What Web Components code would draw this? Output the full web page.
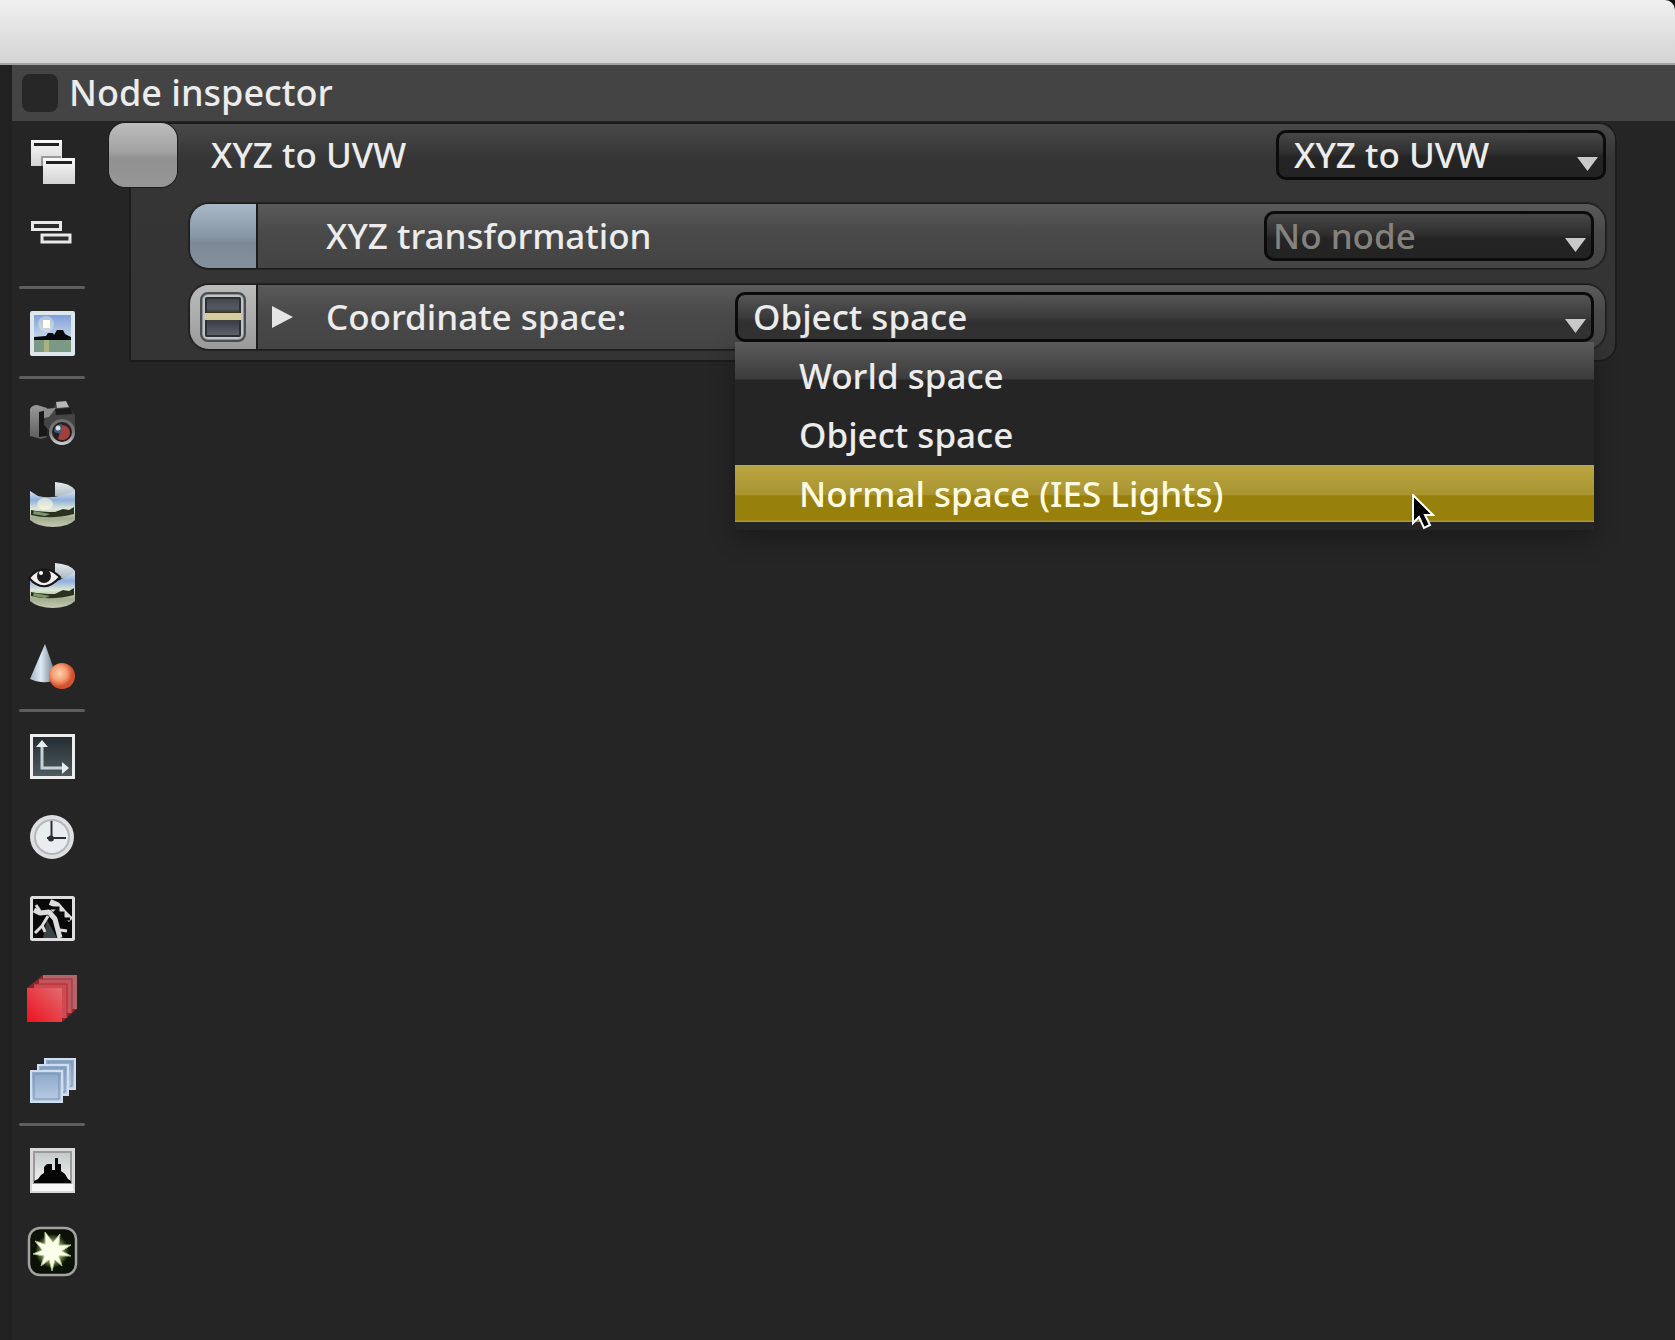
<!DOCTYPE html>
<html lang="en">
<head>
<meta charset="utf-8">
<title>Node inspector</title>
<style>
  html, body { height:100%; }
  body {
    margin:0; background:#252525; color:#ececec;
    font:500 35px/48px "Noto Sans", "Open Sans", sans-serif;
  }
</style>
</head>
<body>
<app-window>
  <inspector-header slot="header">Node inspector</inspector-header>
  <tool-bar slot="tools"></tool-bar>
  <node-panel label="XYZ to UVW" value="XYZ to UVW">
    <node-row label="XYZ transformation" value="No node" kind="pin"></node-row>
    <node-row label="Coordinate space:" value="Object space" kind="enum">
      <drop-menu slot="menu">
        <menu-item>World space</menu-item>
        <menu-item>Object space</menu-item>
        <menu-item active>Normal space (IES Lights)</menu-item>
      </drop-menu>
    </node-row>
  </node-panel>
</app-window>

<script>
// shared look of every drop-down
const SELECT_CSS = `
  .pick { position:relative; display:flex; }
  select {
    appearance:none; box-sizing:border-box; width:100%; height:50px; margin:0;
    padding:0 44px 0 15px; border:3px solid #0b0b0b; border-radius:10px;
    background:linear-gradient(#474747, #2f2f2f 45%, #242424 55%, #232323);
    color:inherit; font:inherit; line-height:44px; outline:0;
  }
  .pick svg { position:absolute; right:8px; bottom:9px; width:21px; height:14px; pointer-events:none; }
`;
const ARROW = '<svg viewBox="0 0 21 14"><path d="M0 0h21L10.500 14z" fill="#c9c9c9"/></svg>';

class AppWindow extends HTMLElement {
  constructor() {
    super();
    this.attachShadow({ mode: 'open' }).innerHTML = `
      <style>
        :host { display:flex; flex-direction:column; min-height:100vh; }
        .top { background:#111; }
        .title {
          height:65px; box-sizing:border-box; border-bottom:2px solid #a2a2a2;
          border-top-right-radius:10px;
          background:linear-gradient(#f0f0f0, #e2e2e2 50%, #d3d3d3);
        }
        .content {
          flex:1; display:flex; flex-direction:column;
          border-left:12px solid #212121; background:#252525;
        }
        .work { flex:1; display:flex; align-items:flex-start; }
        main { flex:1; min-width:0; padding:1px 58px 0 17px; }
      </style>
      <div class="top"><div class="title"></div></div>
      <div class="content">
        <slot name="header"></slot>
        <div class="work">
          <slot name="tools"></slot>
          <main><slot></slot></main>
        </div>
      </div>
    `;
  }
}

class InspectorHeader extends HTMLElement {
  constructor() {
    super();
    this.attachShadow({ mode: 'open' }).innerHTML = `
      <style>
        :host { display:flex; align-items:center; gap:11px; height:56px; padding-left:10px; background:#444; }
        i { width:36px; height:38px; border-radius:8px; background:#272727; }
        h1 { margin:0; font-size:36px; font-weight:500; }
      </style>
      <i></i><h1><slot></slot></h1>
    `;
  }
}

const ICONS = {
  windows: `
    <path d="M1 0h31v26H1z" fill="url(#w)"/><path d="M4 3h25v3H4z" fill="#222"/>
    <path d="M11 16h20v10H11z" fill="#555" opacity=".5"/>
    <path d="M13 18h32v26H13z" fill="url(#w)"/><path d="M16 21h26v3H16z" fill="#222"/>`,
  collapsed: `
    <g fill="#2c2c2c" stroke="#e8e8e8" stroke-width="3"><path d="M2.500 1.500h28v7h-28zM12 14h28v7H12z"/></g>`,
  picture: `
    <rect width="45" height="45" rx="2" fill="#dce6ec"/><path d="M4 4h37v24H4z" fill="url(#sky)"/>
    <circle cx="16" cy="13" r="8" fill="#fffde0" opacity=".35"/><path d="M13 9h7v8h-7z" fill="#fffff0"/>
    <path d="M4 28h37v13H4z" fill="#7b9a86"/><path d="M14 29h5v12h-5z" fill="#b3ba7e" opacity=".8"/>
    <path d="M4 26l12-1 2-3h5l1 2 3-5h6l2 4 6 3v3H4z" fill="#060a0c"/>`,
  camera: `
    <path d="M0 8q2-4 7-4l10 3v29l-6 2-11-3z" fill="url(#metal)"/><path d="M9 11l8-2v26l-8 1z" fill="#181818"/>
    <path d="M14 9l9-2 3-4 13 3 6 8v20H23l-9-10z" fill="#444"/><path d="M14 8l12-1-7 9-5 1z" fill="#8d8d8d"/>
    <path d="M26 1l10-1 3 6-12 1z" fill="#b7b7b7"/><path d="M25 8l15-1 3 6-17 1z" fill="#1b1b1b"/>
    <circle cx="32" cy="31" r="13" fill="url(#rim)"/><circle cx="32" cy="31" r="10" fill="#241f22"/>
    <path d="M32 24a8 8 0 018 8 8 8 0 01-12 6z" fill="#a2413a"/><path d="M24 31a8 8 0 018-8l-1 10z" fill="#41597d"/>
    <circle cx="28" cy="27" r="2.500" fill="#d5dae4"/>`,
  panorama: `
    <path d="M25 0q15 1 20 8v10L25 14z" fill="url(#metal2)"/>
    <path d="M0 9l8 5q17 4 37-5v29q-7 7-22 7T0 38z" fill="url(#pano)"/>
    <ellipse cx="15" cy="22" rx="8" ry="6" fill="#fffce0" opacity=".6"/>
    <path d="M1 28q10 2 24 2l8-3 6 1 5-3v7q-24 6-43 1z" fill="#27331f"/><path d="M4 29l16 3-5 2-12-2z" fill="#82966b"/>`,
  viewer: `
    <path d="M25 0q15 1 20 8v10L25 14z" fill="url(#metal2)"/>
    <path d="M0 16q22 9 45-7v29q-7 7-22 7T0 38z" fill="url(#pano)"/>
    <path d="M1 29q10 2 24 2l8-4 6 1 5-3v7q-24 6-43 1z" fill="#27331f"/><path d="M4 30l16 3-5 2-12-2z" fill="#82966b"/>
    <path d="M-1 15Q13-2 30 14 14 32-1 15z" fill="#f4eeee" stroke="#161616" stroke-width="2"/>
    <circle cx="14" cy="13" r="7" fill="#1a1a1c"/><circle cx="11" cy="10" r="2" fill="#fff"/>`,
  shapes: `
    <path d="M15 0l12 34q-10 8-27 1z" fill="url(#cone)"/>
    <circle cx="32" cy="32" r="13" fill="url(#ball)"/>`,
  axes: `
    <rect x="1.500" y="1.500" width="42" height="42" fill="url(#slate)" stroke="#eee" stroke-width="3"/>
    <path d="M12 10v24h24" fill="none" stroke="#c6d2d5" stroke-width="3"/>
    <path d="M12 6l6 7H6zM39 34l-7-6v12z" fill="#e6eef0"/>`,
  clock: `
    <circle cx="22" cy="22" r="22" fill="#dfdfe1"/><circle cx="22" cy="22" r="17" fill="#e9eded" stroke="#b5b7ba" stroke-width="2"/>
    <path d="M21.500 6v20M17 23h19" stroke="#293133" stroke-width="2"/><circle cx="21" cy="23.500" r="3" fill="#293133"/>`,
  kernel: `
    <rect x="1.500" y="1.500" width="42" height="42" rx="1" fill="#090909" stroke="#dedede" stroke-width="3"/>
    <path d="M17 24l10 18H13z" fill="#3a4444"/>
    <g fill="none" stroke="#dcdcdc" stroke-linejoin="bevel">
      <path d="M4 14l6 3 9-1 6 7 5 19" stroke-width="5"/><path d="M18 20l-6 10-7 7" stroke-width="3"/>
      <path d="M20 6l7 3 6 7 8 8" stroke-width="6"/><path d="M6 9l4 6M22 15l5-5M12 29l3 7M30 34l7 1" stroke-width="3"/>
    </g>
    <path d="M22 12h6v5h5v6h7" fill="none" stroke="#090909" stroke-width="3"/>`,
  red: `
    <path d="M-3 11L13-2h34v34L32 45H-3z" fill="#8d242b"/>
    <path d="M13-2h34v34H13z" fill="#b3666a"/><path d="M9 2h33v34H9z" fill="#c4555b"/>
    <path d="M4 7h33v34H4z" fill="#d1484f"/>
    <path d="M42 2v34M37 7v34M9 2h33M4 7h33" stroke="#9a3238" fill="none"/>
    <path d="M-3 11h35v34H-3z" fill="url(#red)"/>`,
  blue: `
    <g fill="url(#blue)" stroke="#cfdff0" stroke-width="2"><path d="M15 1h30v30H15z"/><path d="M8 7h30v30H8z"/>
    <path d="M1 13h31v31H1z"/></g><path d="M4 16h25v25H4z" fill="none" stroke="#7891b0"/>
    <path d="M11 12V10h24v24h-2M18 6V4h24v24h-2" fill="none" stroke="#7891b0"/>`,
  histogram: `
    <rect width="45" height="45" fill="#d9d9d9"/><path d="M4 4h37v31H4z" fill="url(#grey)" stroke="#999" stroke-width="2"/>
    <path d="M2 36h41v7H2z" fill="#f8f8f8"/>
    <path d="M4 35v-2l4-2 3-4 3-2v-6l3-3h5v6h3V10h3v6h3v7l4 3 3 5 3 2v2z" fill="#050505"/>`,
  glow: `
    <rect x="-1" y="-1" width="47" height="47" rx="11" fill="#0b1205" stroke="#a2a2a2" stroke-width="2.500"/>
    <circle cx="22" cy="22" r="17" fill="url(#glow)"/>
    <path d="M15 3l8 10 7-8-1 11 12 0-9 6 9 5-12 0 3 10-7-6-3 11-3-11-8 6 3-10-11-2 9-4-7-9 10 3z" fill="#faffea" stroke="#a8bd7a"/>`
};

const TOOLS = [
  ['windows', 'Expand nodes'], ['collapsed', 'Collapse nodes'], null,
  ['picture', 'Render target'], null,
  ['camera', 'Camera'], ['panorama', 'Environment'], ['viewer', 'Visible environment'], ['shapes', 'Geometry'], null,
  ['axes', 'Resolution'], ['clock', 'Animation'], ['kernel', 'Kernel'], ['red', 'Render layer'], ['blue', 'Render passes'], null,
  ['histogram', 'Imager'], ['glow', 'Post processing']
];

class ToolBar extends HTMLElement {
  constructor() {
    super();
    this.attachShadow({ mode: 'open' }).innerHTML = `
      <style>
        :host { display:flex; flex-direction:column; width:80px; }
        button {
          display:flex; align-items:center; justify-content:center;
          height:81px; padding:0; border:0; background:none;
        }
        button svg { width:44px; height:44px; overflow:visible; }
        hr { width:66px; height:3px; margin:3px auto; border:0; border-radius:2px; background:#5e5e5e; }
        .defs { position:absolute; width:0; height:0; }
      </style>
      <svg class="defs"><defs>
        ${this._grad('w', '#fafafa', '#d2d2d2')}
        ${this._grad('sky', '#7f9fda', '#c9d9e8')}
        ${this._grad('metal', '#9a9a9a', '#5d5d5d')}
        ${this._grad('metal2', '#e6edee', '#9fb0ba')}
        ${this._grad('rim', '#6d6d6d', '#777', '#d5d5d5')}
        ${this._grad('pano', '#dbe5ee', '#8fb0da', '#e0e8d8', '#a3ac8e', '#c3c9b4')}
        ${this._grad('slate', '#232c30', '#4f5c62')}
        ${this._grad('blue', '#8ba7c9', '#b9cde2')}
        ${this._grad('grey', '#c2c8c8', '#f3f3f3')}
        <linearGradient id="cone"><stop stop-color="#9fb5c4"/><stop offset=".4" stop-color="#dfeaf2"/><stop offset="1" stop-color="#566878"/></linearGradient>
        <linearGradient id="red" x1="1" y1="0" x2="0" y2="1"><stop stop-color="#df6c70"/><stop offset="1" stop-color="#f0101f"/></linearGradient>
        <radialGradient id="ball" cx=".4" cy=".4"><stop stop-color="#ffd3b0"/><stop offset=".6" stop-color="#f59a70"/><stop offset="1" stop-color="#d5512f"/></radialGradient>
        <radialGradient id="glow"><stop stop-color="#fff"/><stop offset=".4" stop-color="#b9d08a"/><stop offset="1" stop-color="#0b1205"/></radialGradient>
      </defs></svg>
      ${TOOLS.map(t => t
        ? `<button type="button" aria-label="${t[1]}"><svg viewBox="0 0 44 44">${ICONS[t[0]]}</svg></button>`
        : '<hr>').join('')}
    `;
  }

  // vertical gradient with evenly spaced stops
  _grad(id, ...colors) {
    const stops = colors.map((c, i) => `<stop offset="${i / (colors.length - 1)}" stop-color="${c}"/>`);
    return `<linearGradient id="${id}" x2="0" y2="1">${stops.join('')}</linearGradient>`;
  }
}

class NodePanel extends HTMLElement {
  constructor() {
    super();
    const label = this.getAttribute('label');
    this.attachShadow({ mode: 'open' }).innerHTML = `
      <style>
        ${SELECT_CSS}
        :host { display:block; padding-left:20px; }
        section {
          display:flex; flex-direction:column; gap:15px; box-sizing:border-box;
          padding:0 11px 12px 60px; border-radius:0 18px 18px 0;
          background:linear-gradient(#494949, #353535 38px, #343434);
          box-shadow:inset 0 0 0 2px #1c1c1c;
        }
        header { display:flex; align-items:center; height:66px; margin-left:-80px; }
        i {
          width:68px; height:64px; margin-right:34px; border-radius:16px;
          background:linear-gradient(#bdbdbd, #a2a2a2 45%, #919191 55%, #969696);
          box-shadow:0 0 0 1px #1c1c1c;
        }
        label { flex:1; }
        .pick { width:330px; }
      </style>
      <section>
        <header>
          <i></i>
          <label for="type">${label}</label>
          <div class="pick"><select id="type"><option>${this.getAttribute('value')}</option></select>${ARROW}</div>
        </header>
        <slot></slot>
      </section>
    `;
  }
}

class NodeRow extends HTMLElement {
  constructor() {
    super();
    const isEnum = this.getAttribute('kind') === 'enum';
    this.attachShadow({ mode: 'open' }).innerHTML = `
      <style>
        ${SELECT_CSS}
        :host {
          display:flex; align-items:center; box-sizing:border-box; height:66px;
          padding-right:11px; border:1px solid #1c1c1c; border-radius:20px;
          background:linear-gradient(#5a5a5a, #494949 45%, #444);
          box-shadow:0 0 1px 1px #242424;
        }
        .pin {
          display:flex; align-items:center; justify-content:center;
          width:66px; height:64px; border-right:2px solid #1c1c1c; border-radius:19px 0 0 19px;
          background:linear-gradient(#a9b8c7, #8797a5 50%, #7b8996 60%, #84919d);
        }
        .enum .pin { background:linear-gradient(#bcbcbc, #9a9a9a); }
        .pin svg { width:46px; height:50px; }
        .row { display:flex; flex:1; align-items:center; }
        button { display:flex; justify-content:center; width:68px; padding:0 20px 0 0; box-sizing:border-box; border:0; background:none; }
        button svg { width:21px; height:22px; }
        .gap { width:68px; }
        label { flex:1; }
        .pick { width:330px; }
        .pin-row select { color:#85817d; padding-left:6px; }
        .enum label { flex:none; width:409px; }
        .enum .pick { flex:1; width:auto; }
        .enum select { background:linear-gradient(#555, #3b3b3b 50%, #303030 60%, #343434); }
      </style>
      <div class="row ${isEnum ? 'enum' : 'pin-row'}">
        <div class="pin">${isEnum ? `
          <svg viewBox="0 0 46 50">
            <defs><linearGradient id="bar" x2="0" y2="1">
              <stop stop-color="#3f4347"/><stop offset=".3" stop-color="#555a63"/>
              <stop offset=".4" stop-color="#3c3420"/><stop offset=".65" stop-color="#3f444c"/><stop offset="1" stop-color="#646a72"/>
            </linearGradient></defs>
            <rect x="1" y="1" width="44" height="48" rx="7" fill="#8d9090" stroke="#4a4d4d" stroke-width="2"/>
            <rect x="4" y="4" width="38" height="42" rx="4" fill="url(#bar)" stroke="#c0c4c6" stroke-width="2"/>
            <rect x="6" y="6" width="34" height="38" rx="1" fill="none" stroke="#2c3033" stroke-width="2"/>
            <path d="M5 21h36v7H5z" fill="#d5cd9d"/>
          </svg>` : ''}</div>
        ${isEnum
          ? '<button type="button" aria-label="Expand"><svg viewBox="0 0 21 22"><path d="M0 0l21 11L0 22z" fill="#e4e4e4"/></svg></button>'
          : '<span class="gap"></span>'}
        <label for="value">${this.getAttribute('label')}</label>
        <div class="pick"><select id="value"><option>${this.getAttribute('value')}</option></select>${ARROW}<slot name="menu"></slot></div>
      </div>
    `;
  }
}

class DropMenu extends HTMLElement {
  constructor() {
    super();
    this.setAttribute('role', 'listbox');
    this.attachShadow({ mode: 'open' }).innerHTML = `
      <style>
        :host {
          position:absolute; top:100%; left:0; right:0; z-index:1;
          display:flex; flex-direction:column; gap:2px; padding:5px 0 8px;
          background:linear-gradient(#5c5c5c, #3b3b3b 37px, #252525 38px);
          box-shadow:0 8px 24px rgba(0,0,0,.3);
        }
        /* pointer resting on the active entry */
        svg { position:absolute; right:159px; bottom:0; width:23px; height:36px; }
      </style>
      <slot></slot>
      <svg viewBox="0 0 23 36"><path d="M1 1v28l6-6 5 11 6-3-5-10h8z" fill="#000" stroke="#fff" stroke-width="2"/></svg>
    `;
  }
}

class MenuItem extends HTMLElement {
  constructor() {
    super();
    this.setAttribute('role', 'option');
    this.attachShadow({ mode: 'open' }).innerHTML = `
      <style>
        :host { display:flex; align-items:center; height:57px; padding-left:64px; }
        :host([active]) {
          background:linear-gradient(#b9a745, #a9942f 52%, #98800d 54%, #98800d 96%, #b3a04a);
          color:#fffbe2;
        }
      </style>
      <slot></slot>
    `;
  }
}

customElements.define('app-window', AppWindow);
customElements.define('inspector-header', InspectorHeader);
customElements.define('tool-bar', ToolBar);
customElements.define('node-panel', NodePanel);
customElements.define('node-row', NodeRow);
customElements.define('drop-menu', DropMenu);
customElements.define('menu-item', MenuItem);
</script>
</body>
</html>
